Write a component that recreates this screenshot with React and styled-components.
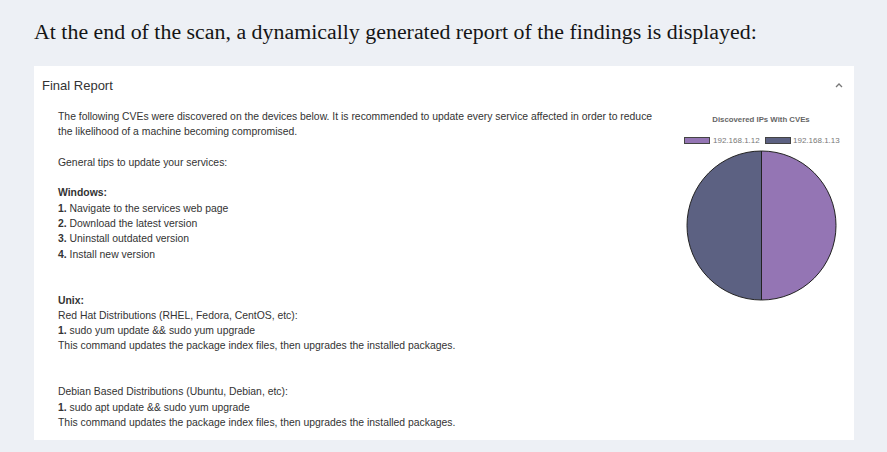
import React from "react";
import styled, { createGlobalStyle } from "styled-components";

const Global = createGlobalStyle`
  html, body { margin: 0; padding: 0; background: #edf0f5; }
  body { width: 887px; height: 452px; overflow: hidden; }
`;

const Page = styled.div`
  padding: 17px 33px 0 34px;
`;

const Heading = styled.h2`
  margin: 0 0 20px 0;
  font-family: "Liberation Serif", "DejaVu Serif", serif;
  font-weight: 400;
  font-size: 21.9px;
  line-height: 29px;
  color: #151515;
`;

const Card = styled.section`
  background: #fff;
  width: 820px;
  height: 374px;
  box-sizing: border-box;
  padding: 10px 9px 0 8px;
`;

const CardHeader = styled.div`
  display: flex;
  justify-content: space-between;
  align-items: center;
  height: 19px;
  padding-right: 2px;
  font-family: "Liberation Sans", Arial, sans-serif;
  font-size: 13px;
  color: #333;
`;

const Chevron = styled.svg`
  width: 8px;
  height: 6px;
  margin-top: -1px;
`;

const Body = styled.div`
  display: flex;
  justify-content: space-between;
  padding: 14px 0 0 16px;
`;

const TextCol = styled.div`
  font-family: "Liberation Sans", Arial, sans-serif;
  font-size: 10.4px;
  line-height: 15.3px;
  color: #333;
  width: 600px;
`;

const Para = styled.p`
  margin: 0 0 ${(p) => p.$gap ?? 15.3}px 0;
`;

const Line = styled.div``;

const ChartCol = styled.div`
  width: 165px;
  margin-top: -1px;
`;

const steps = (items) =>
  items.map((t, i) => (
    <Line key={i}>
      <b>{i + 1}.</b> {t}
    </Line>
  ));

const PURPLE = "#9475b4";
const SLATE = "#5c6182";

export default function App() {
  const cx = 81.5,
    cy = 117.5,
    r = 74.5;
  return (
    <>
      <Global />
      <Page>
        <Heading>
          At the end of the scan, a dynamically generated report of the findings is displayed:
        </Heading>
        <Card>
          <CardHeader>
            <span>Final Report</span>
            <Chevron viewBox="0 0 8 6">
              <path d="M1 5 L4 2 L7 5" fill="none" stroke="#777" strokeWidth="1.3" />
            </Chevron>
          </CardHeader>
          <Body>
            <TextCol>
              <Para>
                The following CVEs were discovered on the devices below. It is recommended to update every
                service affected in order to reduce the likelihood of a machine becoming compromised.
              </Para>
              <Para>General tips to update your services:</Para>
              <Para $gap={30.6}>
                <Line>
                  <b>Windows:</b>
                </Line>
                {steps([
                  "Navigate to the services web page",
                  "Download the latest version",
                  "Uninstall outdated version",
                  "Install new version",
                ])}
              </Para>
              <Para $gap={30.6}>
                <Line>
                  <b>Unix:</b>
                </Line>
                <Line>Red Hat Distributions (RHEL, Fedora, CentOS, etc):</Line>
                {steps(["sudo yum update && sudo yum upgrade"])}
                <Line>This command updates the package index files, then upgrades the installed packages.</Line>
              </Para>
              <Para $gap={0}>
                <Line>Debian Based Distributions (Ubuntu, Debian, etc):</Line>
                {steps(["sudo apt update && sudo yum upgrade"])}
                <Line>This command updates the package index files, then upgrades the installed packages.</Line>
              </Para>
            </TextCol>
            <ChartCol>
              <svg width="165" height="200" viewBox="0 0 165 200" fontFamily="Liberation Sans, Arial, sans-serif">
                <text x={81} y="14" textAnchor="middle" fontSize="7.8" fontWeight="bold" fill="#666">
                  Discovered IPs With CVEs
                </text>
                <rect x="4.5" y="29.5" width="25" height="6" fill={PURPLE} stroke="#444" strokeWidth="1" />
                <text x="33" y="35" fontSize="8" fill="#777">192.168.1.12</text>
                <rect x="85.5" y="29.5" width="25" height="6" fill={SLATE} stroke="#444" strokeWidth="1" />
                <text x="113" y="35" fontSize="8" fill="#777">192.168.1.13</text>
                <path
                  d={`M${cx} ${cy - r} A${r} ${r} 0 0 1 ${cx} ${cy + r} Z`}
                  fill={PURPLE}
                  stroke="#222"
                  strokeWidth="1"
                />
                <path
                  d={`M${cx} ${cy + r} A${r} ${r} 0 0 1 ${cx} ${cy - r} Z`}
                  fill={SLATE}
                  stroke="#222"
                  strokeWidth="1"
                />
              </svg>
            </ChartCol>
          </Body>
        </Card>
      </Page>
    </>
  );
}
